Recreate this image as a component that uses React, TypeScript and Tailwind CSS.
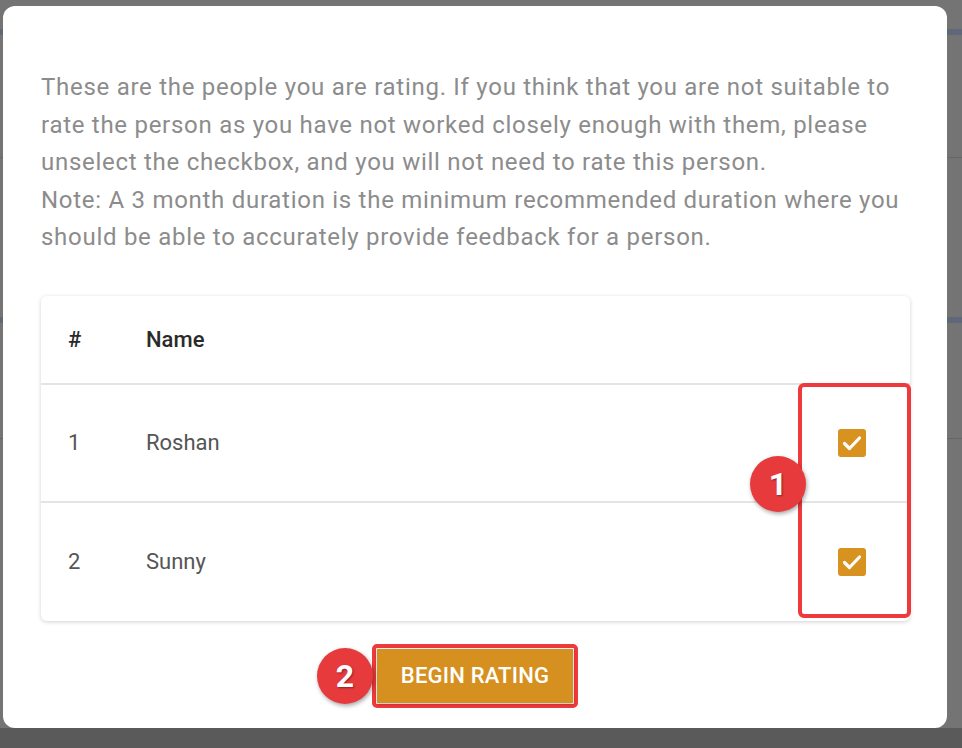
import React from "react";

function Check() {
  return (
    <div className="w-[28px] h-[28px] rounded-[3px] bg-[#d8921f] flex items-center justify-center">
      <svg width="28" height="28" viewBox="0 0 28 28" fill="none">
        <path d="M6.5 14.5l5 5L21.5 9" stroke="white" strokeWidth="3.2" strokeLinecap="round" strokeLinejoin="round" />
      </svg>
    </div>
  );
}

function Badge({ n }: { n: string }) {
  return (
    <div className="w-[56px] h-[56px] rounded-full bg-[#e73a3d] shadow-[1px_2px_4px_rgba(0,0,0,0.35)] flex items-center justify-center text-white text-[32px] font-bold [text-shadow:1px_1px_2px_rgba(0,0,0,0.4)]">
      {n}
    </div>
  );
}

export default function App() {
  const rows = [
    { id: "1", name: "Roshan" },
    { id: "2", name: "Sunny" },
  ];
  return (
    <div className="relative w-[962px] h-[748px] overflow-hidden bg-[#747474] font-['Roboto',sans-serif]">
      {/* background page behind overlay */}
      <div className="flex flex-col w-full h-full">
        <div className="h-[29px]" />
        <div className="h-[6px] bg-[#5d6878]" />
        <div className="h-[123px] border-b border-[#666]" />
        <div className="h-[159px]" />
        <div className="h-[6px] bg-[#5d6878]" />
        <div className="h-[116px] border-b border-[#666]" />
        <div className="flex-1" />
        <div className="h-[20px] bg-[#5a5a5a]" />
      </div>

      {/* modal */}
      <div className="absolute left-[3px] top-[6px] w-[944px] h-[722px] rounded-[12px] bg-white flex flex-col px-[38px] pt-[63px]">
        <p className="text-[24px] leading-[37.5px] tracking-[0.72px] text-[#8c8c8c] w-[869px]">
          These are the people you are rating. If you think that you are not suitable to rate the person as you have not worked closely enough with them, please unselect the checkbox, and you will not need to rate this person.
          <br />
          Note: A 3 month duration is the minimum recommended duration where you should be able to accurately provide feedback for a person.
        </p>

        <div className="mt-[39px] w-[869px] rounded-[6px] bg-white shadow-[0_1px_4px_rgba(0,0,0,0.18)] flex flex-col">
          <div className="h-[89px] flex items-center border-b-2 border-[#e4e4e4] text-[22px] font-medium text-[#2a2a2a]">
            <div className="w-[105px] pl-[27px]">#</div>
            <div>Name</div>
          </div>
          {rows.map((r, i) => (
            <div
              key={r.id}
              className={`h-[118px] flex items-center text-[22px] text-[#555] ${i === 0 ? "border-b-2 border-[#e4e4e4]" : ""}`}
            >
              <div className="w-[105px] pl-[27px]">{r.id}</div>
              <div className="flex-1">{r.name}</div>
              <div className="w-[111px] flex justify-center pr-[6px]">
                <Check />
              </div>
            </div>
          ))}
        </div>

        <div className="mt-[23px] flex justify-center">
          <div className="rounded-[5px] border-[4px] border-[#ee3a3c] p-[1px]">
            <button className="w-[196px] h-[54px] bg-[#d6901f] text-white text-[22px] font-medium tracking-[0.2px] shadow-[0_1px_3px_rgba(0,0,0,0.3)]">
              BEGIN RATING
            </button>
          </div>
        </div>
      </div>

      {/* annotation box around checkboxes */}
      <div className="absolute left-[798px] top-[383px] w-[113px] h-[235px] rounded-[6px] border-[4px] border-[#ee3a3c]" />

      {/* numbered badges */}
      <div className="absolute left-[750px] top-[456px]">
        <Badge n="1" />
      </div>
      <div className="absolute left-[317px] top-[648px]">
        <Badge n="2" />
      </div>
    </div>
  );
}
